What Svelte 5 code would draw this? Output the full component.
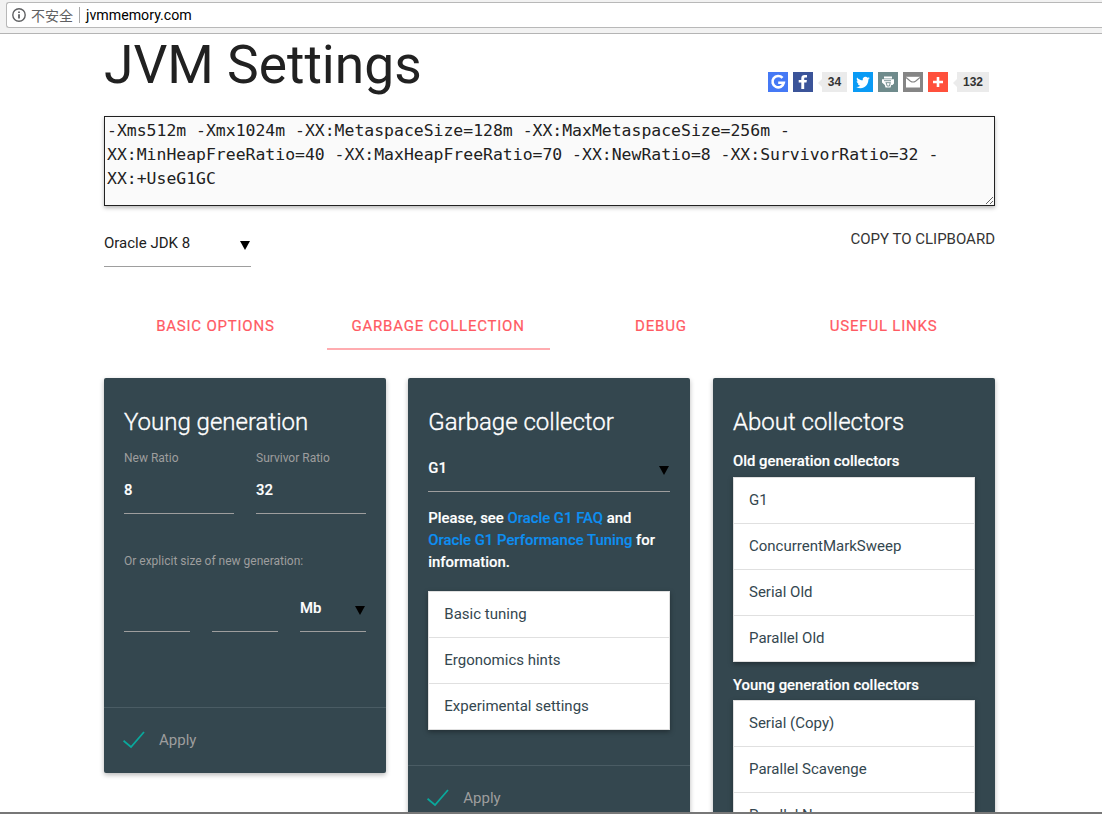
<script>
  const options = `-Xms512m -Xmx1024m -XX:MetaspaceSize=128m -XX:MaxMetaspaceSize=256m -
XX:MinHeapFreeRatio=40 -XX:MaxHeapFreeRatio=70 -XX:NewRatio=8 -XX:SurvivorRatio=32 -
XX:+UseG1GC`;
  const tabs = ['Basic options', 'Garbage collection', 'Debug', 'Useful links'];
  const tuning = ['Basic tuning', 'Ergonomics hints', 'Experimental settings'];
  const oldGen = ['G1', 'ConcurrentMarkSweep', 'Serial Old', 'Parallel Old'];
  const youngGen = ['Serial (Copy)', 'Parallel Scavenge', 'Parallel New'];
</script>

{#snippet collection(items)}
  <ul class="collection">
    {#each items as item}<li>{item}</li>{/each}
  </ul>
{/snippet}

{#snippet caret()}
  <svg class="caret" width="10" height="9" viewBox="0 0 10 9"><path d="M0 0h10L5 9z" /></svg>
{/snippet}

{#snippet apply()}
  <div class="action">
    <svg width="22" height="18" viewBox="0 0 22 18"><path d="M.5 9.8L8 16L21 1" fill="none" stroke="#0aa89c" stroke-width="1.8" /></svg>
    <span>Apply</span>
  </div>
{/snippet}

<div class="screen">
  <div class="toolbar">
    <div class="address">
      <svg width="14" height="14" viewBox="0 0 14 14"><circle cx="7" cy="7" r="6.2" fill="none" stroke="#5f6062" stroke-width="1.4" /><path d="M6.1 6.2h1.8v4.3H6.100zM6.100 3.400h1.800v1.700H6.100z" fill="#5f6062" /></svg>
      <span class="insecure">不安全</span>
      <span class="url">jvmmemory.com</span>
    </div>
  </div>

  <main>
    <header>
      <h1>JVM Settings</h1>
      <div class="share">
        <svg class="s" viewBox="0 0 20 20"><rect width="20" height="20" fill="#4579f5" /><path d="M14.500 5.900A5.700 5.700 0 1 0 15.800 10.800H10.200" fill="none" stroke="#fff" stroke-width="2.600" /></svg>
        <svg class="s" viewBox="0 0 20 20"><rect width="20" height="20" fill="#3b5499" /><path d="M8.300 17v-6.500H5.700V8h2.600V6.200C8.300 4 9.600 3 11.600 3H14v2.500h-1.500c-1.100 0-1.300.5-1.300 1.300V8h2.700l-.4 2.500h-2.300V17z" fill="#fff" /></svg>
        <span class="count c1">34</span>
        <svg class="s" viewBox="0 0 20 20"><rect width="20" height="20" fill="#0a9bf5" /><path d="M16.800 6.100c-.5.2-1 .4-1.600.5.6-.4 1-.9 1.200-1.600-.5.3-1.100.6-1.800.7a2.800 2.800 0 0 0-4.800 2.600C7.500 8.200 5.500 7.100 4.100 5.400c-.8 1.300-.3 2.900.9 3.800-.5 0-.9-.1-1.300-.3 0 1.400 1 2.500 2.300 2.800-.4.1-.8.1-1.300 0 .4 1.100 1.400 1.900 2.600 2-1.200.9-2.600 1.300-4.100 1.200 5.800 3.500 12.200-.3 12.200-7.300.6-.4 1-.9 1.400-1.500z" fill="#fff" /></svg>
        <svg class="s" viewBox="0 0 20 20"><rect width="20" height="20" fill="#6f8b8c" /><path d="M6 4.500h8v2H6zM4 7.200h12v4.300l-1.500 1.500h-1.300l-.7 2.500h-5L6.800 13 4 10.500z" fill="#fff" /><path d="M6 8.700h7M7.500 10.700h5.300M8.300 11l.8 3h2.400l.6-3" fill="none" stroke="#6f8b8c" stroke-width=".9" /></svg>
        <svg class="s" viewBox="0 0 20 20"><rect width="20" height="20" fill="#858585" /><rect x="3" y="4.800" width="14" height="10.700" fill="#fff" /><path d="M3 5.500l4.500 3.700q2.500 1.500 5 0L17 5.500" fill="none" stroke="#858585" stroke-width="1.100" /></svg>
        <svg class="s" viewBox="0 0 20 20"><rect width="20" height="20" fill="#ff503c" /><path d="M10 5v10M5 10h10" stroke="#fff" stroke-width="2.600" /></svg>
        <span class="count c2">132</span>
      </div>
    </header>

    <textarea readonly spellcheck="false" value={options}></textarea>

    <div class="tools">
      <div class="select jdk"><span>Oracle JDK 8</span>{@render caret()}</div>
      <span class="copy">COPY TO CLIPBOARD</span>
    </div>

    <nav>
      {#each tabs as tab, i}<span class="tab" class:active={i === 1}>{tab}</span>{/each}
    </nav>

    <div class="cards">
      <section class="card young">
        <div class="body">
          <h2>Young generation</h2>
          <div class="pair">
            <div class="field"><span class="label">New Ratio</span><b>8</b></div>
            <div class="field"><span class="label">Survivor Ratio</span><b>32</b></div>
          </div>
          <p class="label explicit">Or explicit size of new generation:</p>
          <div class="triple">
            <div class="select"></div>
            <div class="select"></div>
            <div class="select"><b>Mb</b>{@render caret()}</div>
          </div>
        </div>
        {@render apply()}
      </section>

      <section class="card gc">
        <div class="body">
          <h2>Garbage collector</h2>
          <div class="select collector"><b>G1</b>{@render caret()}</div>
          <p class="note">Please, see <span class="link">Oracle G1 FAQ</span> and<br /><span class="link">Oracle G1 Performance Tuning</span> for<br />information.</p>
          {@render collection(tuning)}
        </div>
        {@render apply()}
      </section>

      <section class="card about">
        <div class="body">
          <h2>About collectors</h2>
          <h3>Old generation collectors</h3>
          {@render collection(oldGen)}
          <h3 class="next">Young generation collectors</h3>
          {@render collection(youngGen)}
        </div>
      </section>
    </div>
  </main>
  <div class="edge"></div>
</div>

<style>
  :global(body) { margin: 0; overflow: hidden; }
  * { box-sizing: border-box; }
  .screen { height: 814px; overflow: hidden; display: flex; flex-direction: column; background: #fff; font: 15px/22px Roboto, sans-serif; color: #212121; }
  svg { display: block; flex: none; }
  h1, h2, h3, p, ul { margin: 0; padding: 0; }
  .toolbar { flex: none; height: 34px; padding: 2px 0 0 6px; background: #f2f2f2; border-bottom: 1px solid #b4b4b4; }
  .address { height: 26px; border: 1px solid #b8b8b8; border-right: 0; border-radius: 3px 0 0 3px; background: #fff; display: flex; align-items: center; padding-left: 5px; }
  .insecure { margin-left: 5px; padding-right: 6px; border-right: 1px solid #aaa; font: 14px/16px "Noto Sans CJK SC", sans-serif; color: #5f6062; }
  .url { margin-left: 6px; color: #000; font-size: 14.2px; }
  main { flex: 1; min-height: 0; overflow: hidden; padding: 0 107px 0 104px; }
  header { height: 82px; display: flex; justify-content: space-between; }
  h1 { font-size: 53.3px; font-weight: 400; line-height: 63px; white-space: nowrap; }
  .share { display: flex; align-items: flex-start; gap: 5px; padding: 38px 6px 0 0; }
  .s { width: 20px; height: 20px; }
  .count { position: relative; height: 20px; background: #ebebeb; text-align: center; font: bold 12px/20px "Liberation Sans", sans-serif; color: #333; margin-left: 4px; }
  .count::before { content: ''; position: absolute; left: -4px; top: 7px; border: 4px solid transparent; border-left: 0; border-right-color: #ebebeb; }
  .c1 { width: 25px; margin-right: 1px; }
  .c2 { width: 32px; }
  textarea { display: block; width: 891px; height: 90px; padding: 2px; border: 1px solid #212121; background: #fafafa; color: #212121; font: 16.44px/24px "DejaVu Sans Mono", monospace; box-shadow: 0 2px 4px rgba(0,0,0,.28); white-space: pre; overflow: hidden; resize: both; outline: none; }
  .tools { height: 96px; display: flex; justify-content: space-between; padding-top: 16px; }
  .select { height: 44px; display: flex; align-items: center; justify-content: space-between; border-bottom: 1px solid #9e9e9e; }
  .jdk { width: 147px; height: 45px; padding: 0 1px 3px 0; }
  .caret { fill: #000; margin-top: 5px; }
  .copy { line-height: 35px; color: #343434; }
  nav { height: 48px; display: flex; }
  .tab { flex: 1; text-align: center; text-transform: uppercase; line-height: 48px; letter-spacing: .78px; color: #ff5a63; -webkit-text-stroke: .2px #ff5a63; }
  .active { border-bottom: 2px solid #ffacb0; }
  .cards { display: grid; grid-template-columns: repeat(3, 282px); justify-content: space-between; align-items: start; padding-top: 28px; }
  .card { background: #34474f; color: #fff; border-radius: 2px; box-shadow: 0 2px 5px rgba(0,0,0,.28); }
  .body { padding: 20px; }
  .young .body { height: 329px; }
  .gc { margin: 0 .2px 0 -.2px; }
  .gc .body { height: 387px; }
  .about { height: 500px; }
  h2 { font-size: 24px; line-height: 48px; font-weight: 300; -webkit-text-stroke: .35px #fff; }
  .pair { display: grid; grid-template-columns: 1fr 1fr; gap: 22px; }
  .field { height: 68px; display: flex; flex-direction: column; border-bottom: 1px solid #9e9e9e; padding-top: 1px; }
  .field b { margin-top: 10px; }
  .label { color: #9e9e9e; font-size: 12px; }
  b, h3, .note { font-weight: 500; font-size: 14.87px; -webkit-text-stroke: .15px currentColor; }
  .explicit { margin-top: 36px; }
  .triple { display: grid; grid-template-columns: repeat(3, 1fr); gap: 22px; margin-top: 16px; }
  .triple .select { padding: 0 1px 4px 0; }
  .triple .caret { margin-top: 6px; }
  .collector { height: 46px; padding: 0 1px 1px 0; }
  .note { margin: 15px 0 18px; white-space: nowrap; }
  .link { color: #0d8ff2; }
  h3 { line-height: 31px; }
  .next { line-height: 30px; margin-top: 8px; }
  .collection { list-style: none; background: #fff; border: 1px solid #e0e0e0; color: #34474f; box-shadow: 0 2px 5px rgba(0,0,0,.35); }
  .collection li { height: 46px; line-height: 45px; padding-left: 15px; border-bottom: 1px solid #e0e0e0; }
  .collection li:last-child { border-bottom: 0; height: 45px; }
  .action { height: 66px; border-top: 1px solid #4a5c64; display: flex; align-items: center; padding: 0 0 1px 19px; color: #9e9e9e; gap: 14px; }
  .edge { flex: none; height: 2px; background: #777; }
</style>
